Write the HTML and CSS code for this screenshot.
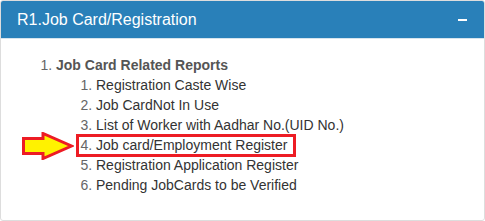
FILE: index.html
```html
<!DOCTYPE html>
<html lang="en">

<head>
    <meta charset="UTF-8">
    <title>R1.Job Card/Registration</title>
    <link rel="stylesheet" href="styles.css">
</head>

<body>
    <div class="panel">
        <div class="panel-heading">
            <span class="panel-title">R1.Job Card/Registration</span>
            <svg class="collapse" width="9" height="2" viewBox="0 0 9 2">
                <rect width="9" height="2" fill="#fff"></rect>
            </svg>
        </div>
        <div class="panel-body">
            <ol class="reports">
                <li><b>Job Card Related Reports</b>
                    <ol>
                        <li>Registration Caste Wise</li>
                        <li>Job CardNot In Use</li>
                        <li>List of Worker with Aadhar No.(UID No.)</li>
                        <li class="highlight">Job card/Employment Register
                            <span class="mark"></span>
                            <svg class="arrow" width="52" height="28" viewBox="0 0 52 28">
                                <polygon points="1.5,6.5 21,6.5 21,1.5 49.5,14 21,26.5 21,21.5 1.5,21.5"
                                    fill="#fff200" stroke="#ed1c24" stroke-width="3"></polygon>
                            </svg>
                        </li>
                        <li>Registration Application Register</li>
                        <li>Pending JobCards to be Verified</li>
                    </ol>
                </li>
            </ol>
        </div>
    </div>
</body>

</html>
```
FILE: styles.css
```css
body {
    margin: 0;
    font-family: "Liberation Sans", Arial, sans-serif;
    background-color: #fff;
}

.panel {
    height: 219px;
    border: 1px solid #ddd;
    border-radius: 3px;
    overflow: hidden;
}

.panel-heading {
    height: 37px;
    padding: 0 17px 0 16px;
    background-color: #2980b9;
    border-bottom: 1px solid #d6e4ee;
    display: flex;
    align-items: center;
    justify-content: space-between;
}

.panel-title {
    color: #fff;
    font-size: 16px;
}

.panel-body {
    padding: 16px 15px;
}

.reports {
    margin: 0;
    padding-left: 40px;
    font-size: 14px;
    line-height: 20px;
    color: #333;
}

.reports li::marker {
    color: #666;
}

.reports > li > b {
    color: #555;
}

.reports ol {
    margin: 0;
    padding-left: 40px;
}

.highlight {
    position: relative;
}

.mark {
    position: absolute;
    left: -20px;
    top: -1px;
    width: 214px;
    height: 17px;
    border: 3px solid #ed1c24;
}

.arrow {
    position: absolute;
    left: -74px;
    top: -3px;
}
```
